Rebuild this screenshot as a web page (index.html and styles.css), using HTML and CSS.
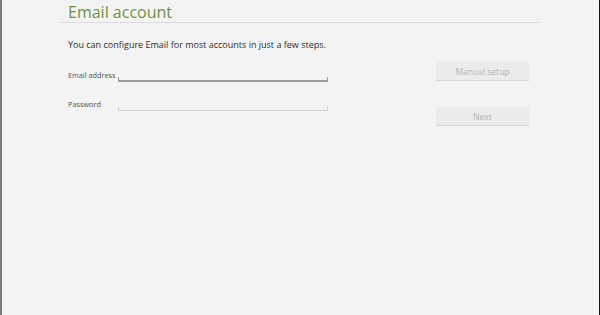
FILE: index.html
```html
<!DOCTYPE html>
<html lang="en">
<head>
    <meta charset="UTF-8">
    <meta name="viewport" content="width=device-width, initial-scale=1.0">
    <title>Email account</title>
    <link rel="stylesheet" href="styles.css">
</head>
<body>
    <div class="tela">
        <div class="cabecalho">
            <h1 class="titulo">Email account</h1>
        </div>
        <p class="descricao">You can configure Email for most accounts in just a few steps.</p>

        <div class="formulario">
            <div class="campos">
                <div class="campo campo-email">
                    <label class="rotulo">Email address</label>
                    <div class="entrada ativa"></div>
                </div>
                <div class="campo campo-senha">
                    <label class="rotulo">Password</label>
                    <div class="entrada"></div>
                </div>
            </div>
            <div class="botoes">
                <button class="botao">Manual setup</button>
                <button class="botao botao-next">Next</button>
            </div>
        </div>
    </div>
</body>
</html>
```

FILE: styles.css
```css
* {
    margin: 0;
    padding: 0;
    box-sizing: border-box;
}

html, body {
    width: 600px;
    height: 315px;
    overflow: hidden;
}

body {
    font-family: "Open Sans", "Noto Sans", sans-serif;
    background-color: #f3f3f3;
}

.tela {
    height: 315px;
    border-left: 2px solid #7a7a7a;
    border-right: 1px solid #1a1a1a;
    box-shadow: inset -6px 0 0 #f6f6f6;
    padding-left: 58px;
}

.cabecalho {
    width: 480px;
    height: 23px;
    border-bottom: 1px solid #dcdcdc;
    padding-left: 8px;
    padding-top: 3px;
}

.titulo {
    font-size: 16px;
    font-weight: normal;
    color: #6d9140;
    line-height: 19px;
}

.descricao {
    font-size: 9px;
    color: #2e2e2e;
    padding-left: 8px;
    margin-top: 16px;
    line-height: 12px;
}

.formulario {
    display: flex;
    padding-left: 8px;
    margin-top: 10px;
}

.campos {
    width: 260px;
    display: flex;
    flex-direction: column;
}

.campo {
    display: flex;
    align-items: flex-end;
}

.campo-email {
    height: 22px;
    margin-top: 1px;
}

.campo-senha {
    height: 22px;
    margin-top: 7px;
}

.rotulo {
    width: 50px;
    font-size: 7.3px;
    color: #555;
    line-height: 10px;
    align-self: flex-start;
    margin-top: 8px;
}

.entrada {
    width: 210px;
    height: 4px;
    border: 1px solid #cfcfcf;
    border-top: none;
    margin-bottom: 2px;
}

.entrada.ativa {
    border-color: #9a9a9a;
    border-bottom-width: 2px;
    height: 5px;
}

.botoes {
    display: flex;
    flex-direction: column;
    margin-left: 108px;
    margin-top: 1px;
    gap: 26px;
}

.botao {
    width: 93px;
    height: 19px;
    background-color: #ebebeb;
    border: none;
    border-bottom: 1px solid #d6d6d6;
    font-family: "Open Sans", "Noto Sans", sans-serif;
    font-size: 8.5px;
    color: #b4b4b4;
}
```
